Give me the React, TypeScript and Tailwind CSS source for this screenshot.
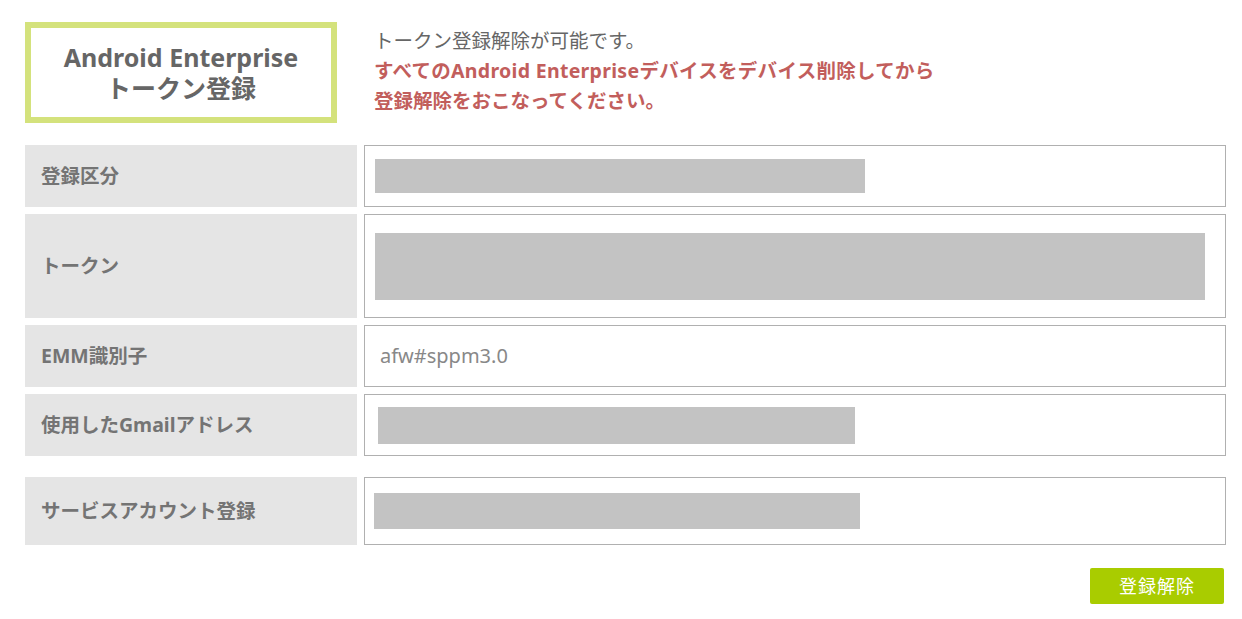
import React from 'react';

const font = { fontFamily: '"Noto Sans", "Noto Sans CJK JP", sans-serif' };

function Row({ label, h, children, className = '' }: { label: string; h: string; children?: React.ReactNode; className?: string }) {
  return (
    <div className={`flex gap-[7px] ${h} ${className}`}>
      <div className="w-[332px] shrink-0 bg-[#e5e5e5] flex items-center pl-4 text-[19.5px] font-bold text-[#747474]">
        {label}
      </div>
      <div className="flex-1 border border-[#b0b0b0] bg-white flex items-center">{children}</div>
    </div>
  );
}

export default function App() {
  return (
    <div className="w-[1242px] h-[619px] bg-white pl-[25px] pr-[16px] pt-[22px]" style={font}>
      <div className="flex">
        <div className="w-[312px] h-[101px] border-[6px] border-[#d4e27c] flex flex-col items-center justify-center text-[25px] leading-[31px] font-bold text-[#666666]">
          <div>Android Enterprise</div>
          <div>トークン登録</div>
        </div>
        <div className="ml-[37px] mt-[4px] text-[19.5px] leading-[30px]">
          <div className="text-[#666666]">トークン登録解除が可能です。</div>
          <div className="font-bold text-[#c25e5c] tracking-[0.3px]">すべてのAndroid Enterpriseデバイスをデバイス削除してから</div>
          <div className="font-bold text-[#c25e5c]">登録解除をおこなってください。</div>
        </div>
      </div>

      <div className="mt-[22px] flex flex-col gap-[7px]">
        <Row label="登録区分" h="h-[62px]">
          <div className="ml-[10px] w-[490px] h-[34px] bg-[#c3c3c3]" />
        </Row>
        <Row label="トークン" h="h-[104px]">
          <div className="ml-[10px] w-[830px] h-[67px] bg-[#c3c3c3]" />
        </Row>
        <Row label="EMM識別子" h="h-[62px]">
          <span className="ml-[15px] text-[20px] text-[#888888]">afw#sppm3.0</span>
        </Row>
        <Row label="使用したGmailアドレス" h="h-[62px]">
          <div className="ml-[13px] w-[477px] h-[37px] bg-[#c3c3c3]" />
        </Row>
        <Row label="サービスアカウント登録" h="h-[68px]" className="mt-[14px]">
          <div className="ml-[9px] w-[486px] h-[36px] bg-[#c3c3c3]" />
        </Row>
      </div>

      <div className="flex justify-end mt-[23px] pr-[2px]">
        <button className="w-[134px] h-[36px] bg-[#a9cc00] rounded-[2px] text-white text-[18px] tracking-[1px]">
          登録解除
        </button>
      </div>
    </div>
  );
}
